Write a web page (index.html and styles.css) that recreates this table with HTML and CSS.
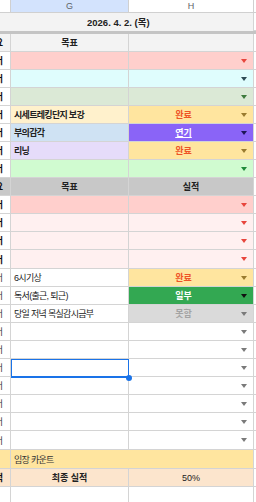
FILE: index.html
```html
<!DOCTYPE html>
<html lang="ko">
<head>
<meta charset="utf-8">
<link rel="stylesheet" href="styles.css">
</head>
<body>
<div class="sheet">
  <div class="row colhead">
    <div class="c l"></div>
    <div class="c g center sel-head">G</div>
    <div class="c h center">H</div>
    <div class="c x"></div>
  </div>
  <div class="row date">
    <div class="span">2026. 4. 2. (목)</div>
    <div class="c x"></div>
  </div>
  <div class="freeze"></div>
  <div class="row head-lite">
    <div class="c l"><span class="cut b">요</span></div>
    <div class="c g center b">목표</div>
    <div class="c h"></div>
    <div class="c x"></div>
  </div>

  <div class="row pink">
    <div class="c l"><span class="cut b">어</span></div>
    <div class="c g"></div>
    <div class="c h dd"><span class="t"></span><i class="arr red"></i></div>
    <div class="c x"></div>
  </div>
  <div class="row cyan">
    <div class="c l"><span class="cut b">어</span></div>
    <div class="c g"></div>
    <div class="c h dd"><span class="t"></span><i class="arr slate"></i></div>
    <div class="c x"></div>
  </div>
  <div class="row sage">
    <div class="c l"><span class="cut b">어</span></div>
    <div class="c g"></div>
    <div class="c h dd"><span class="t"></span><i class="arr dgreen"></i></div>
    <div class="c x"></div>
  </div>
  <div class="row">
    <div class="c l"><span class="cut b">어</span></div>
    <div class="c g cream b">시세트레킹단지 보강</div>
    <div class="c h dd gold"><span class="t done">완료</span><i class="arr brown"></i></div>
    <div class="c x"></div>
  </div>
  <div class="row">
    <div class="c l"><span class="cut b">어</span></div>
    <div class="c g sky b">부의감각</div>
    <div class="c h dd violet"><span class="t later">연기</span><i class="arr navy"></i></div>
    <div class="c x"></div>
  </div>
  <div class="row">
    <div class="c l"><span class="cut b">어</span></div>
    <div class="c g lav b">리닝</div>
    <div class="c h dd gold"><span class="t done">완료</span><i class="arr brown"></i></div>
    <div class="c x"></div>
  </div>
  <div class="row mint">
    <div class="c l"><span class="cut b">어</span></div>
    <div class="c g"></div>
    <div class="c h dd"><span class="t"></span><i class="arr green"></i></div>
    <div class="c x"></div>
  </div>

  <div class="row head-dark">
    <div class="c l"><span class="cut b">요</span></div>
    <div class="c g center b">목표</div>
    <div class="c h center b">실적</div>
    <div class="c x"></div>
  </div>
  <div class="row pink">
    <div class="c l"><span class="cut b">어</span></div>
    <div class="c g"></div>
    <div class="c h dd"><span class="t"></span><i class="arr red"></i></div>
    <div class="c x"></div>
  </div>
  <div class="row blush">
    <div class="c l"><span class="cut b">어</span></div>
    <div class="c g"></div>
    <div class="c h dd"><span class="t"></span><i class="arr red"></i></div>
    <div class="c x"></div>
  </div>
  <div class="row blush">
    <div class="c l"><span class="cut b">어</span></div>
    <div class="c g"></div>
    <div class="c h dd"><span class="t"></span><i class="arr red"></i></div>
    <div class="c x"></div>
  </div>
  <div class="row blush tall">
    <div class="c l"><span class="cut b">어</span></div>
    <div class="c g"></div>
    <div class="c h dd"><span class="t"></span><i class="arr red"></i></div>
    <div class="c x"></div>
  </div>

  <div class="row">
    <div class="c l"><span class="cut">어</span></div>
    <div class="c g">6시기상</div>
    <div class="c h dd gold"><span class="t done">완료</span><i class="arr brown"></i></div>
    <div class="c x"></div>
  </div>
  <div class="row">
    <div class="c l"><span class="cut">어</span></div>
    <div class="c g">독서(출근, 퇴근)</div>
    <div class="c h dd leaf"><span class="t part">일부</span><i class="arr black"></i></div>
    <div class="c x"></div>
  </div>
  <div class="row">
    <div class="c l"><span class="cut">어</span></div>
    <div class="c g">당일 저녁 목실감시금부</div>
    <div class="c h dd ash"><span class="t fail">못함</span><i class="arr grey"></i></div>
    <div class="c x"></div>
  </div>
  <div class="row">
    <div class="c l"><span class="cut">어</span></div>
    <div class="c g"></div>
    <div class="c h dd"><span class="t"></span><i class="arr grey"></i></div>
    <div class="c x"></div>
  </div>
  <div class="row">
    <div class="c l"><span class="cut">어</span></div>
    <div class="c g"></div>
    <div class="c h dd"><span class="t"></span><i class="arr grey"></i></div>
    <div class="c x"></div>
  </div>
  <div class="row">
    <div class="c l"><span class="cut">어</span></div>
    <div class="c g sel"></div>
    <div class="c h dd"><span class="t"></span><i class="arr grey"></i></div>
    <div class="c x"></div>
  </div>
  <div class="row">
    <div class="c l"><span class="cut">어</span></div>
    <div class="c g"></div>
    <div class="c h dd"><span class="t"></span><i class="arr grey"></i></div>
    <div class="c x"></div>
  </div>
  <div class="row">
    <div class="c l"><span class="cut">어</span></div>
    <div class="c g"></div>
    <div class="c h dd"><span class="t"></span><i class="arr grey"></i></div>
    <div class="c x"></div>
  </div>
  <div class="row">
    <div class="c l"><span class="cut">어</span></div>
    <div class="c g"></div>
    <div class="c h dd"><span class="t"></span><i class="arr grey"></i></div>
    <div class="c x"></div>
  </div>
  <div class="row tall">
    <div class="c l"><span class="cut">어</span></div>
    <div class="c g"></div>
    <div class="c h dd"><span class="t"></span><i class="arr grey"></i></div>
    <div class="c x"></div>
  </div>

  <div class="row tall count">
    <div class="c l"></div>
    <div class="c gh">임장 카운트</div>
    <div class="c x"></div>
  </div>
  <div class="row peach">
    <div class="c l"><span class="cut b">적</span></div>
    <div class="c g center b">최종 실적</div>
    <div class="c h center">50%</div>
    <div class="c x"></div>
  </div>
  <div class="row blank">
    <div class="c l"></div>
    <div class="c g"></div>
    <div class="c h"></div>
    <div class="c x"></div>
  </div>
</div>
</body>
</html>
```

FILE: styles.css
```css
* {
  box-sizing: border-box;
  margin: 0;
  padding: 0;
}

body {
  width: 256px;
  background: #ffffff;
  font-family: "Liberation Sans", "Noto Sans CJK KR", sans-serif;
  font-size: 9px;
  color: #222222;
  overflow: hidden;
}

.sheet {
  display: flex;
  flex-direction: column;
}

.row {
  display: grid;
  grid-template-columns: 11px 118px 125px 2px;
  height: 18px;
  flex: none;
}

.row.tall {
  height: 19px;
}

.c {
  display: flex;
  align-items: center;
  min-width: 0;
  overflow: hidden;
  white-space: nowrap;
  border-right: 1px solid #d4d4d4;
  border-bottom: 1px solid #d4d4d4;
}

.c.x {
  border-right: none;
  background: #ffffff;
}

.g,
.gh {
  padding-left: 3px;
  letter-spacing: -0.7px;
}

.center {
  justify-content: center;
  padding-left: 0;
  letter-spacing: 0;
}

.b {
  font-weight: bold;
}

/* left clipped column */
.l {
  justify-content: flex-end;
  padding-right: 7px;
  background: #ffffff;
}

.cut {
  flex: none;
  color: #333333;
}

.cut.b {
  color: #111111;
}

/* column header row */
.colhead {
  height: 13px;
}

.colhead .c {
  font-size: 9px;
  color: #5f6368;
  border-color: #d0d0d0;
}

.sel-head {
  background: #d3e3fd;
  color: #3c4043;
}

/* date row */
.date .span {
  grid-column: 1 / 4;
  display: flex;
  align-items: center;
  padding-left: 87px;
  background: #f3f3f3;
  font-weight: bold;
  font-size: 9.5px;
  border-right: 1px solid #d4d4d4;
}

.freeze {
  height: 3px;
  background: #c4c4c4;
  flex: none;
}

.head-lite .c {
  background: #f3f3f3;
}

.head-dark .c {
  background: #c8c8c8;
}

.head-lite .c.x,
.head-dark .c.x {
  background: #ffffff;
}

/* row colours */
.pink .g, .pink .h { background: #ffcfcc; }
.cyan .g, .cyan .h { background: #dffdfd; }
.sage .g, .sage .h { background: #dbe9d6; }
.mint .g, .mint .h { background: #d0fbd0; }
.blush .g, .blush .h { background: #fff0f0; }
.cream { background: #fff1cc; }
.sky { background: #cfe2f3; }
.lav { background: #e6dcfa; }
.gold { background: #ffe59f; }
.violet { background: #8a64f7; }
.leaf { background: #33a852; }
.ash { background: #dadada; }

.count .l,
.count .gh {
  background: #ffe59f;
}

.count .gh {
  grid-column: 2 / 4;
  color: #333333;
}

.peach .l,
.peach .g,
.peach .h {
  background: #fce5cd;
}

.blank .c {
  border-bottom: none;
}

/* dropdown chips */
.dd .t {
  flex: 1;
  text-align: center;
  font-weight: bold;
}

.done { color: #ee5326; }
.later { color: #ffffff; text-decoration: underline; }
.part { color: #ffffff; }
.fail { color: #a3a3a3; }

.arr {
  flex: none;
  width: 0;
  height: 0;
  margin: 0 6px 0 3px;
  border-left: 3px solid transparent;
  border-right: 3px solid transparent;
  border-top: 4px solid #777777;
}

.arr.red { border-top-color: #e8453c; }
.arr.slate { border-top-color: #2d4b55; }
.arr.dgreen { border-top-color: #3d7a3d; }
.arr.brown { border-top-color: #9a7b2f; }
.arr.navy { border-top-color: #1d1657; }
.arr.green { border-top-color: #1f8a3a; }
.arr.black { border-top-color: #111111; }
.arr.grey { border-top-color: #7a7a7a; }

/* selected cell */
.sel {
  position: relative;
  overflow: visible;
}

.sel::after {
  content: "";
  position: absolute;
  left: 0;
  top: 0;
  right: -1px;
  bottom: -2px;
  border: 1px solid #1a73e8;
  border-bottom-width: 2px;
}

.sel::before {
  content: "";
  position: absolute;
  right: -4px;
  bottom: -5px;
  width: 6px;
  height: 6px;
  border-radius: 50%;
  background: #1a73e8;
  z-index: 2;
}
```
